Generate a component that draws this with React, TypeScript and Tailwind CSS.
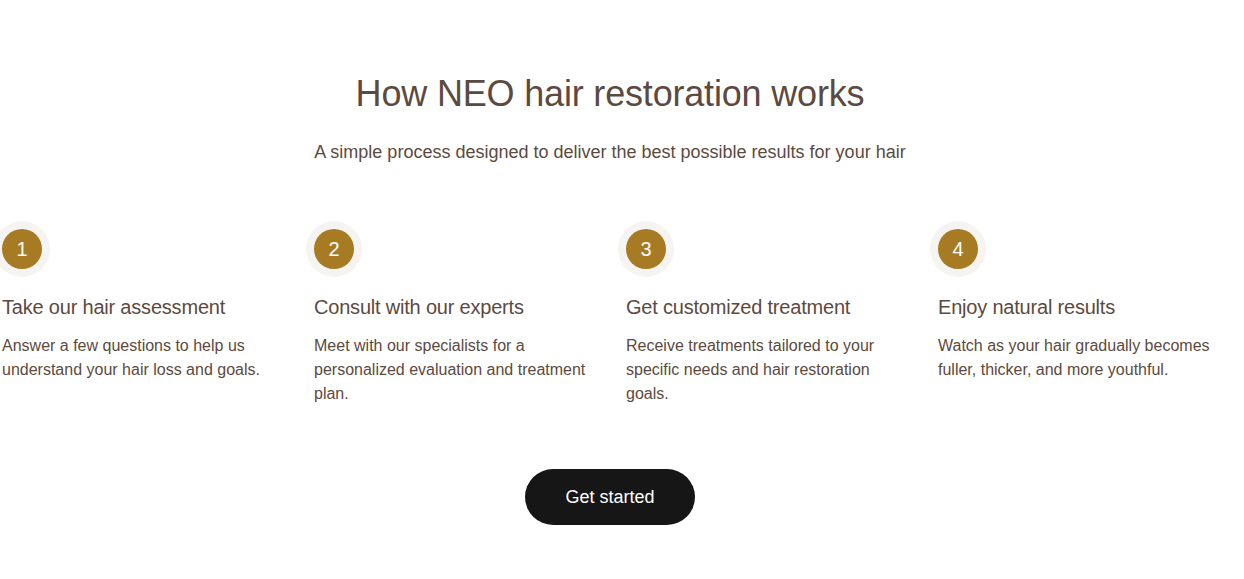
const steps = [
  {
    n: "1",
    title: "Take our hair assessment",
    body: "Answer a few questions to help us understand your hair loss and goals.",
  },
  {
    n: "2",
    title: "Consult with our experts",
    body: "Meet with our specialists for a personalized evaluation and treatment plan.",
  },
  {
    n: "3",
    title: "Get customized treatment",
    body: "Receive treatments tailored to your specific needs and hair restoration goals.",
  },
  {
    n: "4",
    title: "Enjoy natural results",
    body: "Watch as your hair gradually becomes fuller, thicker, and more youthful.",
  },
];

export default function App() {
  return (
    <section className="w-full bg-white font-['Liberation_Sans',Arial,sans-serif] text-[#5c4a40] overflow-hidden">
      <div className="ml-[2px] w-[1216px] pt-[72px] pb-[54px] flex flex-col items-center">
        <h2 className="text-[36px] leading-[44px] font-normal tracking-[-0.005em] text-center">
          How NEO hair restoration works
        </h2>
        <p className="mt-[22px] text-[18px] leading-[28px] text-center">
          A simple process designed to deliver the best possible results for your hair
        </p>

        <div className="mt-[63px] w-full grid grid-cols-4 gap-8">
          {steps.map((s) => (
            <div key={s.n} className="flex flex-col">
              <div className="w-10 h-10 rounded-full bg-[#a67b23] shadow-[0_0_0_8px_#f6f4f0] flex items-center justify-center text-white text-[20px]">
                {s.n}
              </div>
              <h3 className="mt-[24px] text-[20px] leading-[28px] font-normal tracking-[-0.01em]">{s.title}</h3>
              <p className="mt-[13px] text-[16px] leading-[24px] pr-2">{s.body}</p>
            </div>
          ))}
        </div>

        <button className="mt-[63px] h-14 px-10 rounded-full bg-[#161616] text-white text-[18px]">
          Get started
        </button>
      </div>
    </section>
  );
}
